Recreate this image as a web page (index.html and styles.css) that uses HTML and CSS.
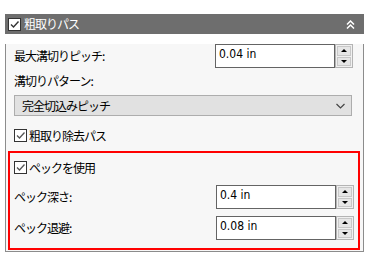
FILE: index.html
```html
<!DOCTYPE html>
<html lang="ja">
<head>
<meta charset="utf-8">
<link rel="stylesheet" href="styles.css">
</head>
<body>
<div class="panel">
  <div class="header">
    <span class="hcheck"><svg width="11" height="11" viewBox="0 0 11 11"><path d="M2 5.5 L4.5 8 L9.5 2.5" fill="none" stroke="#333" stroke-width="1.4"/></svg></span>
    <span class="htitle">粗取りパス</span>
    <svg class="collapse" width="9" height="9" viewBox="0 0 9 9"><path d="M1 4.5 L4.5 1 L8 4.5 M1 8.5 L4.5 5 L8 8.5" fill="none" stroke="#fff" stroke-width="1.5"/></svg>
  </div>
  <div class="body">
    <div class="field first">
      <span class="label">最大溝切りピッチ:</span>
      <div class="spin">
        <div class="input">0.04 in</div>
        <div class="arrows"><span class="btn"><i class="up"></i></span><span class="btn"><i class="down"></i></span></div>
      </div>
    </div>
    <div class="label pattern">溝切りパターン:</div>
    <div class="select">
      <span>完全切込みピッチ</span>
      <svg width="9" height="6" viewBox="0 0 9 6"><path d="M0.5 1 L4.5 5 L8.5 1" fill="none" stroke="#444" stroke-width="1.2"/></svg>
    </div>
    <label class="check remove"><span class="box"><svg width="11" height="11" viewBox="0 0 11 11"><path d="M2 5.5 L4.5 8 L9.5 2.5" fill="none" stroke="#555" stroke-width="1.3"/></svg></span><span>粗取り除去パス</span></label>
    <div class="peck">
      <label class="check"><span class="box"><svg width="11" height="11" viewBox="0 0 11 11"><path d="M2 5.5 L4.5 8 L9.5 2.5" fill="none" stroke="#555" stroke-width="1.3"/></svg></span><span>ペックを使用</span></label>
      <div class="field depth">
        <span class="label">ペック深さ:</span>
        <div class="spin">
          <div class="input">0.4 in</div>
          <div class="arrows"><span class="btn"><i class="up"></i></span><span class="btn"><i class="down"></i></span></div>
        </div>
      </div>
      <div class="field retract">
        <span class="label">ペック退避:</span>
        <div class="spin">
          <div class="input">0.08 in</div>
          <div class="arrows"><span class="btn"><i class="up"></i></span><span class="btn"><i class="down"></i></span></div>
        </div>
      </div>
    </div>
  </div>
</div>
</body>
</html>
```
FILE: styles.css
```css
* { box-sizing: border-box; }
html, body { margin: 0; padding: 0; background: #fff; }
body {
  font-family: "Noto Sans CJK JP", "Noto Sans", sans-serif;
  font-size: 12px;
  color: #000;
  padding-top: 14px;
  padding-left: 5px;
}
.panel { width: 359px; }
.header {
  height: 20px;
  background: #6e6e6e;
  display: flex;
  align-items: center;
  padding-left: 3px;
  padding-right: 9px;
}
.hcheck {
  width: 13px; height: 13px;
  background: #fff;
  border: 1px solid #333;
  display: flex; align-items: center; justify-content: center;
}
.htitle {
  color: #fff;
  margin-left: 3px;
  font-size: 12px;
  letter-spacing: -1px;
  line-height: 16px;
  flex: 1;
}
.collapse { display: block; }
.body {
  background: #f7f7f7;
  border: 1px solid #8c8c8c;
  border-top: none;
}
.label { letter-spacing: -1px; line-height: 16px; }
.field {
  display: flex;
  justify-content: space-between;
  align-items: center;
  height: 24px;
  padding: 0 10px 0 8px;
}
.field.first { margin-top: 10px; }
.spin { display: flex; height: 24px; }
.input {
  width: 120px;
  height: 24px;
  background: #fff;
  border: 1px solid #646464;
  font-family: "DejaVu Sans Condensed", "Liberation Sans", sans-serif;
  font-size: 12px;
  line-height: 14px;
  padding: 2px 0 0 3px;
}
.arrows {
  width: 18px;
  height: 24px;
  border: 1px solid #b4b4b4;
  background: #f0f0f0;
  display: flex;
  flex-direction: column;
  padding: 1px;
  gap: 1px;
}
.btn {
  flex: 1;
  background: #e6e6e6;
  border: 1px solid #c8c8c8;
  display: flex; align-items: center; justify-content: center;
}
.up, .down { width: 0; height: 0; border-left: 3px solid transparent; border-right: 3px solid transparent; }
.up { border-bottom: 3px solid #000; }
.down { border-top: 3px solid #000; }
.pattern { margin: 5px 0 0 8px; }
.select {
  margin: 6px 11px 0 8px;
  height: 21px;
  background: #e1e1e1;
  border: 1px solid #adadad;
  display: flex;
  align-items: center;
  justify-content: space-between;
  padding: 0 6px 0 7px;
  letter-spacing: -1px;
}
.check {
  display: flex;
  align-items: center;
  height: 16px;
  padding-left: 8px;
  letter-spacing: -1px;
}
.check .box {
  width: 13px; height: 13px;
  background: #fff;
  border: 1px solid #333;
  display: flex; align-items: center; justify-content: center;
  margin-right: 2px;
}
.remove { margin-top: 11px; }
.peck {
  margin: 8px 3px 1px 2px;
  border: 2px solid #ff0000;
  padding: 6px 0 8px 0;
}
.peck .check { padding-left: 4px; }
.peck .field { padding: 0 4px 0 4px; }
.depth { margin-top: 10px; }
.retract { margin-top: 7px; }
```
